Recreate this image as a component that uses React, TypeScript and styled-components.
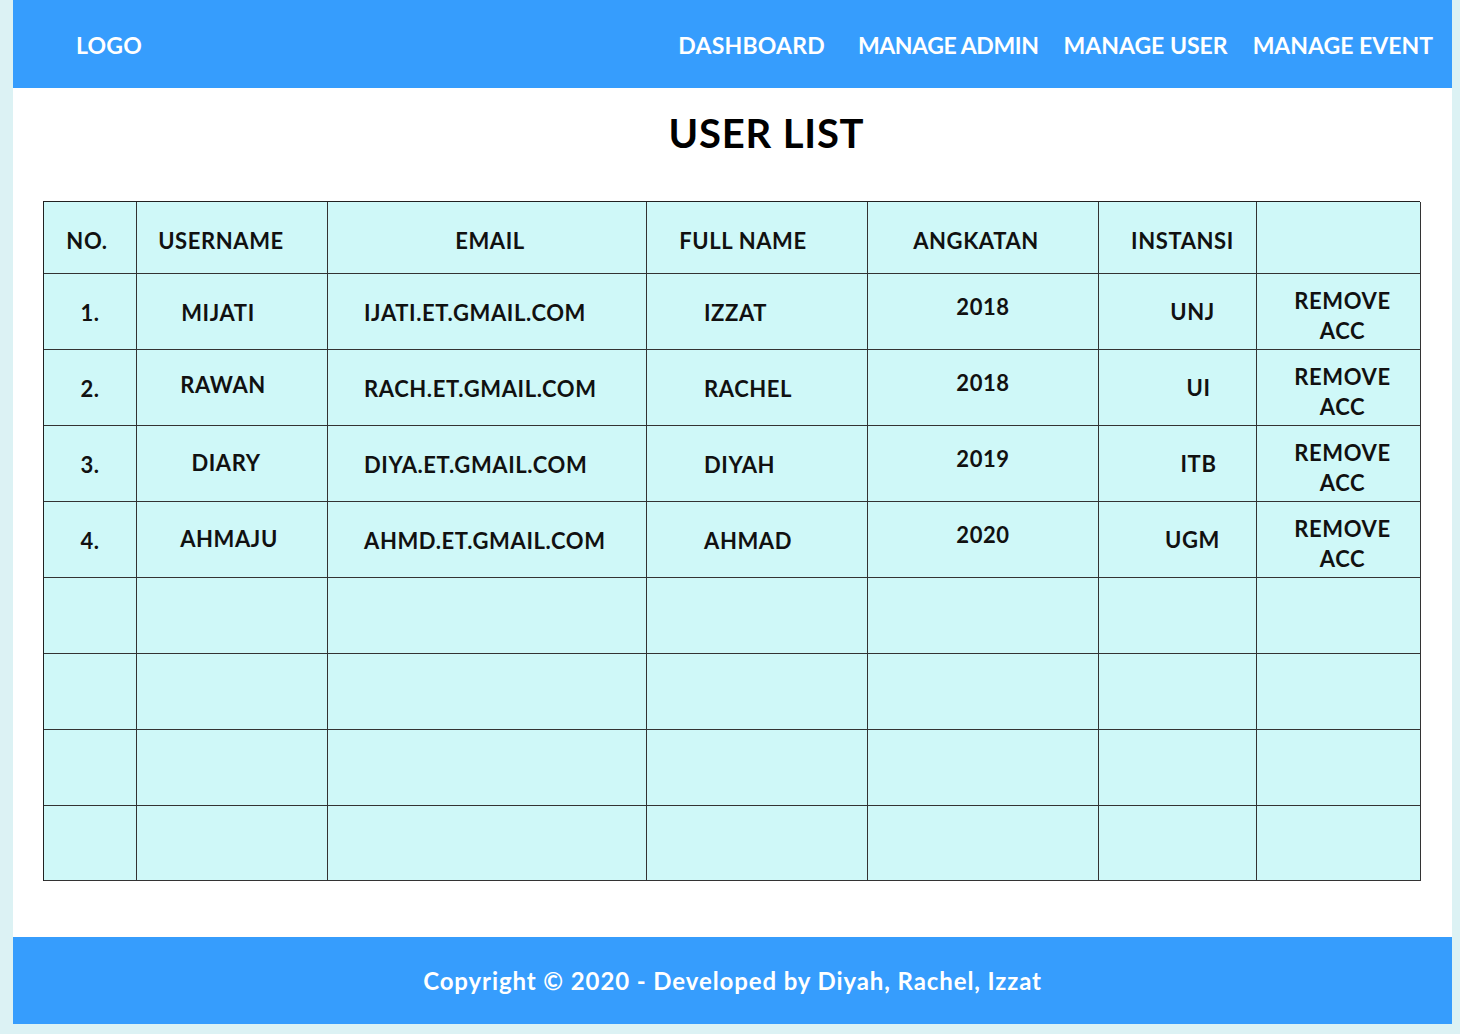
import React from "react";
import styled, { createGlobalStyle } from "styled-components";

const GlobalStyle = createGlobalStyle`
  html, body {
    margin: 0;
    padding: 0;
    background: #dcf2f4;
  }
  body {
    font-family: Lato, "Open Sans", sans-serif;
  }
`;

const Page = styled.div`
  margin-left: 13px;
  width: 1439px;
  height: 1024px;
  background: #ffffff;
  display: flex;
  flex-direction: column;
`;

const Header = styled.header`
  height: 88px;
  background: #369dfd;
  display: flex;
  align-items: center;
  justify-content: space-between;
  padding: 0 19px 0 63px;
  color: #ffffff;
`;

const Logo = styled.div`
  font-size: 23px;
  font-weight: 700;
  letter-spacing: 0.2px;
  margin-top: 2px;
`;

const Nav = styled.nav`
  display: flex;
  align-items: center;
  gap: 25px;
  margin-top: 2px;
`;

const NavItem = styled.a<{ $extra?: number; $ls?: number }>`
  color: #ffffff;
  font-size: 23px;
  font-weight: 700;
  letter-spacing: ${(p) => p.$ls ?? 0}px;
  text-decoration: none;
  margin-left: ${(p) => p.$extra ?? 0}px;
`;

const Main = styled.main`
  flex: 1;
  display: flex;
  flex-direction: column;
  align-items: center;
  padding: 22px 32px 56px 30px;
`;

const Title = styled.h1`
  margin: 0 0 45px 70px;
  height: 46px;
  line-height: 46px;
  font-size: 40px;
  font-weight: 700;
  color: #000;
  letter-spacing: 0.8px;
`;

const Grid = styled.div`
  align-self: stretch;
  display: grid;
  grid-template-columns: 93px 191px 319px 221px 231px 158px 164px;
  grid-template-rows: 72px repeat(7, 76px) 75px;
  border-left: 1px solid #222;
  border-top: 1px solid #222;
  background: #cff8f8;
`;

const Cell = styled.div<{ $align?: "left" | "center"; $pad?: number; $shift?: number; $dy?: number }>`
  border-right: 1px solid #333;
  border-bottom: 1px solid #333;
  display: flex;
  align-items: center;
  justify-content: ${(p) => (p.$align === "left" ? "flex-start" : "center")};
  padding-left: ${(p) => p.$pad ?? 0}px;
  box-sizing: border-box;
  font-size: 22px;
  font-weight: 700;
  letter-spacing: 0.6px;
  color: #111;
  text-align: center;
  line-height: 30px;
  & > span {
    transform: translate(${(p) => p.$shift ?? 0}px, ${(p) => p.$dy ?? 0}px);
  }
`;

type Row = {
  no: string;
  user: string;
  userShift: number;
  email: string;
  name: string;
  year: string;
  inst: string;
  instShift: number;
  userDy: number;
};

const rows: Row[] = [
  { no: "1.", user: "MIJATI", userShift: -14, userDy: 2, email: "IJATI.ET.GMAIL.COM", name: "IZZAT", year: "2018", inst: "UNJ", instShift: 15 },
  { no: "2.", user: "RAWAN", userShift: -9, userDy: -2, email: "RACH.ET.GMAIL.COM", name: "RACHEL", year: "2018", inst: "UI", instShift: 21 },
  { no: "3.", user: "DIARY", userShift: -6, userDy: 0, email: "DIYA.ET.GMAIL.COM", name: "DIYAH", year: "2019", inst: "ITB", instShift: 21 },
  { no: "4.", user: "AHMAJU", userShift: -3, userDy: 0, email: "AHMD.ET.GMAIL.COM", name: "AHMAD", year: "2020", inst: "UGM", instShift: 15 },
];

const Footer = styled.footer`
  height: 88px;
  background: #369dfd;
  display: flex;
  align-items: center;
  justify-content: center;
  color: #ffffff;
  font-size: 24px;
  font-weight: 700;
  letter-spacing: 0.9px;
`;

export default function App() {
  return (
    <>
      <GlobalStyle />
      <Page>
        <Header>
          <Logo>LOGO</Logo>
          <Nav>
            <NavItem href="#" $ls={0.2}>DASHBOARD</NavItem>
            <NavItem href="#" $extra={8} $ls={-0.4}>MANAGE ADMIN</NavItem>
            <NavItem href="#">MANAGE USER</NavItem>
            <NavItem href="#">MANAGE EVENT</NavItem>
          </Nav>
        </Header>
        <Main>
          <Title>USER LIST</Title>
          <Grid>
            <Cell $shift={-3} $dy={4}><span>NO.</span></Cell>
            <Cell $shift={-11} $dy={4}><span>USERNAME</span></Cell>
            <Cell $shift={3} $dy={4}><span>EMAIL</span></Cell>
            <Cell $shift={-14} $dy={4}><span>FULL NAME</span></Cell>
            <Cell $shift={-7} $dy={4}><span>ANGKATAN</span></Cell>
            <Cell $shift={5} $dy={4}><span>INSTANSI</span></Cell>
            <Cell />
            {rows.map((r) => (
              <React.Fragment key={r.no}>
                <Cell $dy={2}><span>{r.no}</span></Cell>
                <Cell $shift={r.userShift} $dy={r.userDy}><span>{r.user}</span></Cell>
                <Cell $align="left" $pad={36} $dy={2}><span>{r.email}</span></Cell>
                <Cell $align="left" $pad={57} $dy={2}><span>{r.name}</span></Cell>
                <Cell $dy={-4}><span>{r.year}</span></Cell>
                <Cell $shift={r.instShift} $dy={1}><span>{r.inst}</span></Cell>
                <Cell $shift={4} $dy={5}><span>REMOVE<br />ACC</span></Cell>
              </React.Fragment>
            ))}
            {Array.from({ length: 28 }).map((_, i) => (
              <Cell key={"e" + i} />
            ))}
          </Grid>
        </Main>
        <Footer>Copyright © 2020 - Developed by Diyah, Rachel, Izzat</Footer>
      </Page>
    </>
  );
}
